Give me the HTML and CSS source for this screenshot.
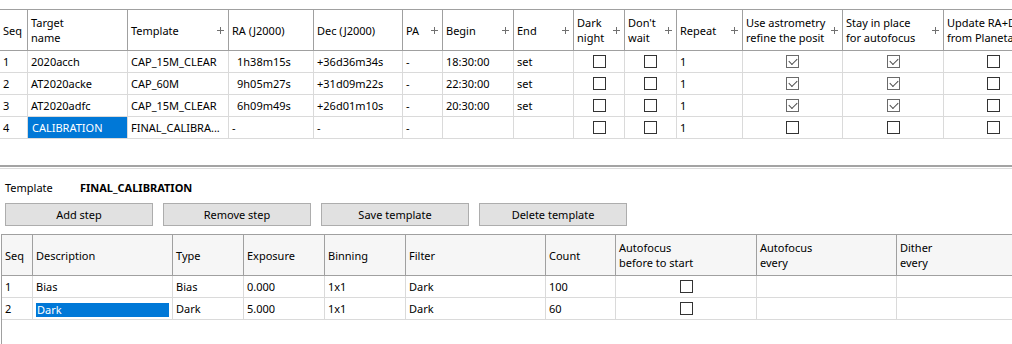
FILE: index.html
```html
<!DOCTYPE html>
<html>
<head>
    <meta charset="UTF-8" />
    <link rel="stylesheet" href="styles.css">
</head>
<body>

    <section class="targets">

        <div class="row head">
            <div class="cell">Seq</div>
            <div class="cell">Target<br>name</div>
            <div class="cell">Template<span class="plus"></span></div>
            <div class="cell">RA (J2000)</div>
            <div class="cell">Dec (J2000)</div>
            <div class="cell">PA<span class="plus"></span></div>
            <div class="cell">Begin<span class="plus"></span></div>
            <div class="cell">End<span class="plus"></span></div>
            <div class="cell">Dark<br>night<span class="plus"></span></div>
            <div class="cell">Don't<br>wait<span class="plus"></span></div>
            <div class="cell">Repeat<span class="plus"></span></div>
            <div class="cell">Use astrometry<br>refine the posit<span class="plus"></span></div>
            <div class="cell">Stay in place<br>for autofocus<span class="plus"></span></div>
            <div class="cell">Update RA+Dec<br>from Planetarium<span class="plus"></span></div>
        </div>

        <div class="row">
            <div class="cell">1</div>
            <div class="cell">2020acch</div>
            <div class="cell">CAP_15M_CLEAR</div>
            <div class="cell ra">1h38m15s</div>
            <div class="cell">+36d36m34s</div>
            <div class="cell">-</div>
            <div class="cell">18:30:00</div>
            <div class="cell">set</div>
            <div class="cell mid"><span class="cb"></span></div>
            <div class="cell mid"><span class="cb"></span></div>
            <div class="cell">1</div>
            <div class="cell mid"><span class="cb on"></span></div>
            <div class="cell mid"><span class="cb on"></span></div>
            <div class="cell mid"><span class="cb"></span></div>
        </div>

        <div class="row">
            <div class="cell">2</div>
            <div class="cell">AT2020acke</div>
            <div class="cell">CAP_60M</div>
            <div class="cell ra">9h05m27s</div>
            <div class="cell">+31d09m22s</div>
            <div class="cell">-</div>
            <div class="cell">22:30:00</div>
            <div class="cell">set</div>
            <div class="cell mid"><span class="cb"></span></div>
            <div class="cell mid"><span class="cb"></span></div>
            <div class="cell">1</div>
            <div class="cell mid"><span class="cb on"></span></div>
            <div class="cell mid"><span class="cb on"></span></div>
            <div class="cell mid"><span class="cb"></span></div>
        </div>

        <div class="row">
            <div class="cell">3</div>
            <div class="cell">AT2020adfc</div>
            <div class="cell">CAP_15M_CLEAR</div>
            <div class="cell ra">6h09m49s</div>
            <div class="cell">+26d01m10s</div>
            <div class="cell">-</div>
            <div class="cell">20:30:00</div>
            <div class="cell">set</div>
            <div class="cell mid"><span class="cb"></span></div>
            <div class="cell mid"><span class="cb"></span></div>
            <div class="cell">1</div>
            <div class="cell mid"><span class="cb on"></span></div>
            <div class="cell mid"><span class="cb on"></span></div>
            <div class="cell mid"><span class="cb"></span></div>
        </div>

        <div class="row">
            <div class="cell">4</div>
            <div class="cell selected">CALIBRATION</div>
            <div class="cell">FINAL_CALIBRA...</div>
            <div class="cell">-</div>
            <div class="cell">-</div>
            <div class="cell">-</div>
            <div class="cell"></div>
            <div class="cell"></div>
            <div class="cell mid"><span class="cb"></span></div>
            <div class="cell mid"><span class="cb"></span></div>
            <div class="cell">1</div>
            <div class="cell mid"><span class="cb"></span></div>
            <div class="cell mid"><span class="cb"></span></div>
            <div class="cell mid"><span class="cb"></span></div>
        </div>

    </section>

    <div class="splitter"></div>

    <section class="template">

        <div class="template-name">
            <span class="label">Template</span>
            <strong>FINAL_CALIBRATION</strong>
        </div>

        <div class="buttons">
            <button>Add step</button>
            <button>Remove step</button>
            <button>Save template</button>
            <button>Delete template</button>
        </div>

        <div class="steps">

            <div class="row head">
                <div class="cell">Seq</div>
                <div class="cell">Description</div>
                <div class="cell">Type</div>
                <div class="cell">Exposure</div>
                <div class="cell">Binning</div>
                <div class="cell">Filter</div>
                <div class="cell">Count</div>
                <div class="cell">Autofocus<br>before to start</div>
                <div class="cell">Autofocus<br>every</div>
                <div class="cell">Dither<br>every</div>
            </div>

            <div class="row">
                <div class="cell">1</div>
                <div class="cell">Bias</div>
                <div class="cell">Bias</div>
                <div class="cell">0.000</div>
                <div class="cell">1x1</div>
                <div class="cell">Dark</div>
                <div class="cell">100</div>
                <div class="cell mid"><span class="cb"></span></div>
                <div class="cell"></div>
                <div class="cell"></div>
            </div>

            <div class="row">
                <div class="cell">2</div>
                <div class="cell"><span class="editor">Dark</span></div>
                <div class="cell">Dark</div>
                <div class="cell">5.000</div>
                <div class="cell">1x1</div>
                <div class="cell">Dark</div>
                <div class="cell">60</div>
                <div class="cell mid"><span class="cb"></span></div>
                <div class="cell"></div>
                <div class="cell"></div>
            </div>

        </div>

    </section>

</body>
</html>
```

FILE: styles.css
```css
* {
    margin: 0;
    padding: 0;
    box-sizing: border-box;
}

body {
    width: 1012px;
    height: 344px;
    overflow: hidden;
    background: #fff;
    color: #000;
    font-family: "Noto Sans", sans-serif;
    font-size: 11px;
}

.row {
    display: grid;
    height: 22px;
    border-bottom: 1px solid #dadada;
}

.cell {
    display: flex;
    align-items: center;
    padding: 0 3px;
    border-right: 1px solid #dadada;
    white-space: nowrap;
    overflow: hidden;
    line-height: 15px;
}

.head {
    height: 41px;
    border-bottom-color: #a0a0a0;
}

.head .cell {
    border-right-color: #a0a0a0;
}

.mid {
    justify-content: center;
}

/* top grid */

.targets {
    margin-top: 9px;
    border-top: 1px solid #a0a0a0;
    overflow: hidden;
}

.targets .row {
    grid-template-columns: 28px 100px 101px 85px 89px 40px 71px 60px 51px 52px 66px 100px 101px 100px;
    width: 1044px;
}

.targets .ra {
    padding-left: 8px;
}

.plus {
    position: relative;
    flex: none;
    width: 7px;
    height: 7px;
    margin-left: auto;
    margin-right: 1px;
}

.plus::before,
.plus::after {
    content: "";
    position: absolute;
    background: #707070;
}

.plus::before {
    left: 0;
    top: 3px;
    width: 7px;
    height: 1px;
}

.plus::after {
    left: 3px;
    top: 0;
    width: 1px;
    height: 7px;
}

.selected {
    background: #0078d7;
    color: #fff;
    padding-left: 4px;
}

.cb {
    position: relative;
    width: 13px;
    height: 13px;
    border: 1px solid #333;
    background: #fff;
}

.cb.on {
    border-color: #6a6a6a;
}

.cb.on::after {
    content: "";
    position: absolute;
    left: 2px;
    top: 2px;
    width: 7px;
    height: 4px;
    border-left: 1px solid #4a4a4a;
    border-bottom: 1px solid #4a4a4a;
    transform: rotate(-45deg);
}

/* splitter */

.splitter {
    margin-top: 26px;
    height: 4px;
    border-top: 2px solid #a3a3a3;
    border-bottom: 1px solid #dcdcdc;
}

/* template panel */

.template-name {
    display: flex;
    align-items: center;
    height: 16px;
    margin-top: 11px;
    padding-left: 5px;
    line-height: 16px;
}

.template-name .label {
    width: 75px;
}

.template-name strong {
    font-weight: 700;
}

.buttons {
    display: flex;
    gap: 10px;
    margin-top: 7px;
    padding-left: 5px;
}

.buttons button {
    width: 148px;
    height: 23px;
    border: 1px solid #adadad;
    background: #e1e1e1;
    font-family: inherit;
    font-size: 11px;
    color: #000;
}

.steps {
    height: 110px;
    margin-top: 8px;
    margin-left: 1px;
    border-top: 1px solid #a0a0a0;
    border-left: 1px solid #a0a0a0;
    overflow: hidden;
}

.steps .row {
    grid-template-columns: 31px 140px 71px 81px 81px 140px 70px 141px 140px 140px;
}

.steps .head {
    background: #f6f6f6;
}

.editor {
    display: block;
    width: 133px;
    height: 14px;
    margin-top: 2px;
    padding-left: 1px;
    line-height: 14px;
    background: #0078d7;
    color: #fff;
}
```
